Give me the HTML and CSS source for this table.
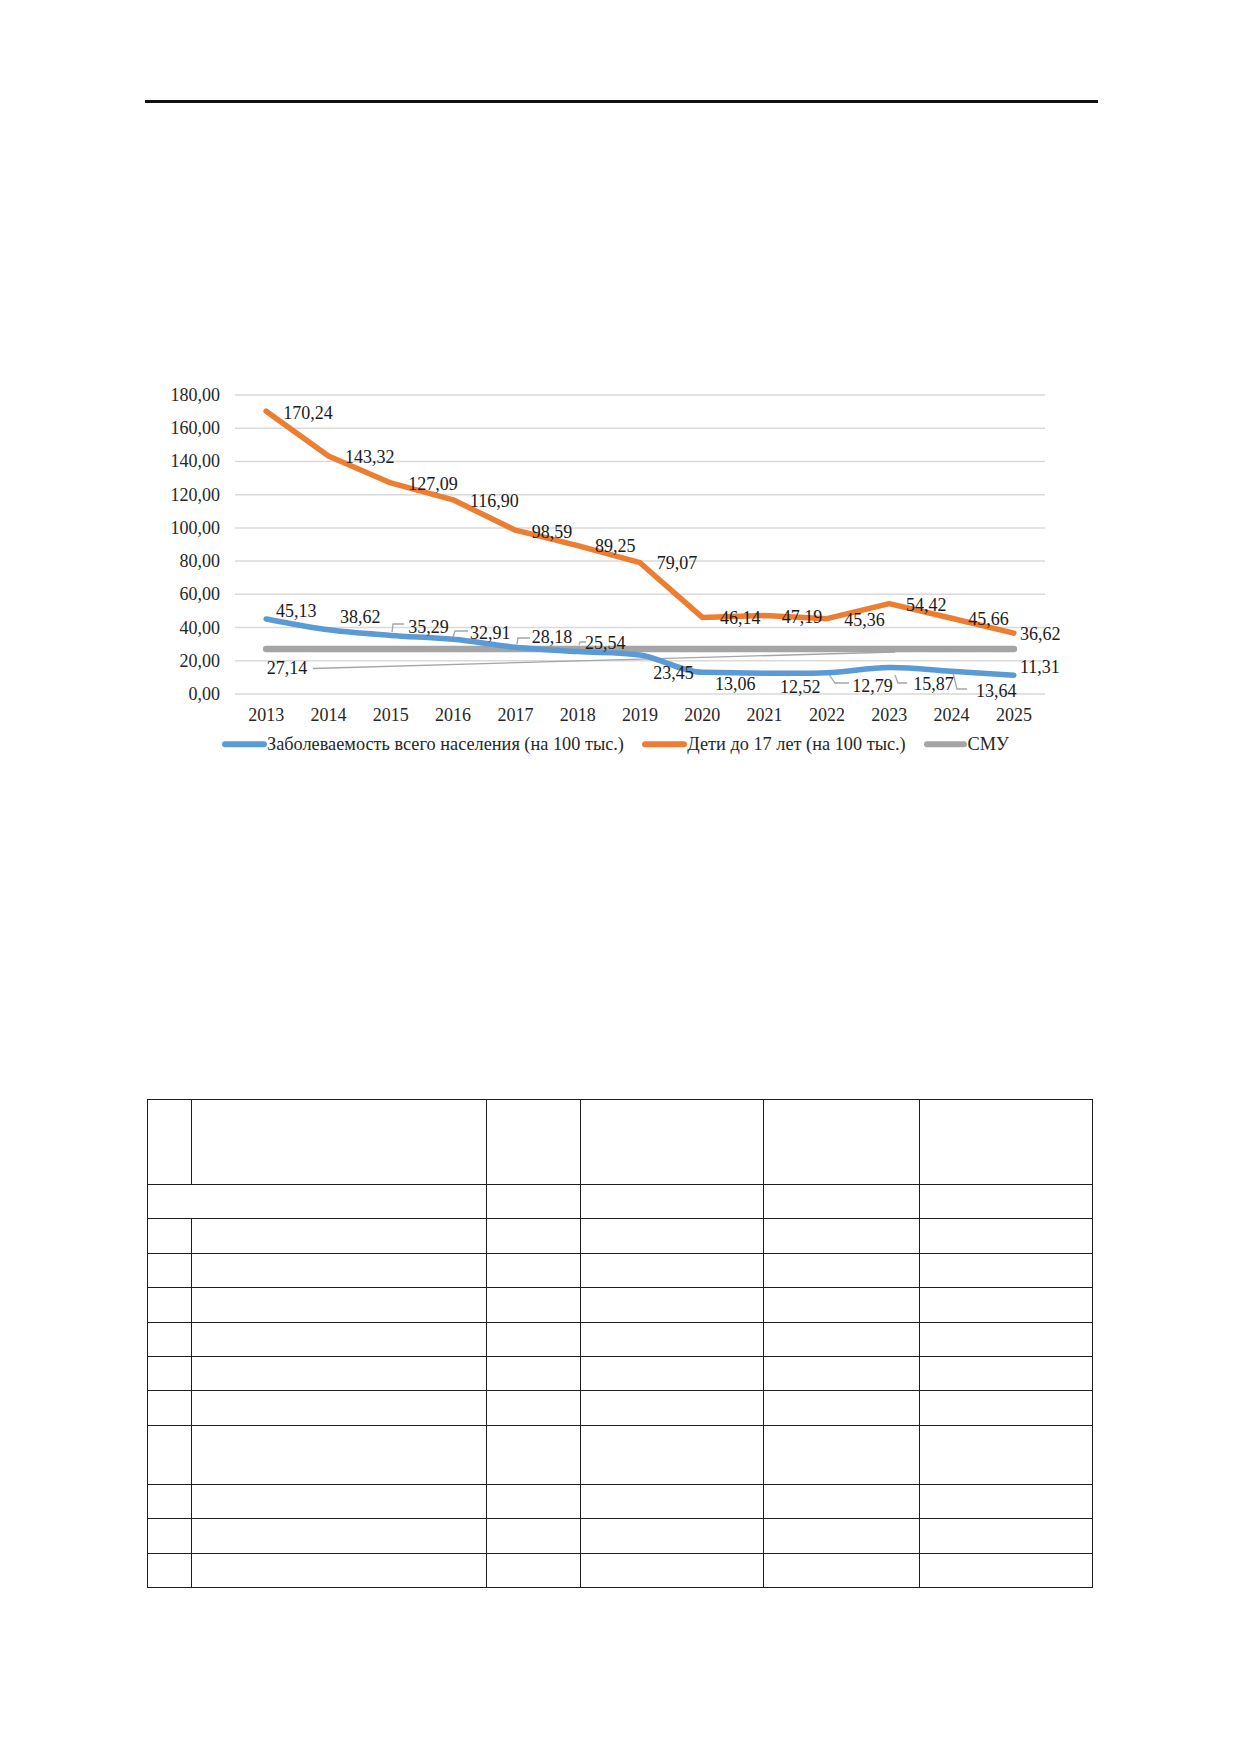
FILE: index.html
```html
<!DOCTYPE html>
<html lang="ru">
<head>
<meta charset="utf-8">
<title>Заболеваемость</title>
<link rel="stylesheet" href="styles.css">
</head>
<body>
<div class="page">
  <div class="rule"></div>

  <svg class="chart" viewBox="140 370 940 400" width="940" height="400" xmlns="http://www.w3.org/2000/svg">
    <g class="grid">
      <line x1="235" y1="395" x2="1045" y2="395"/>
      <line x1="235" y1="428.2" x2="1045" y2="428.2"/>
      <line x1="235" y1="461.4" x2="1045" y2="461.4"/>
      <line x1="235" y1="494.7" x2="1045" y2="494.7"/>
      <line x1="235" y1="527.9" x2="1045" y2="527.9"/>
      <line x1="235" y1="561.1" x2="1045" y2="561.1"/>
      <line x1="235" y1="594.3" x2="1045" y2="594.3"/>
      <line x1="235" y1="627.6" x2="1045" y2="627.6"/>
      <line x1="235" y1="660.8" x2="1045" y2="660.8"/>
      <line x1="235" y1="694" x2="1045" y2="694"/>
    </g>
    <g class="ylab">
      <text x="220" y="395">180,00</text>
      <text x="220" y="428.2">160,00</text>
      <text x="220" y="461.4">140,00</text>
      <text x="220" y="494.7">120,00</text>
      <text x="220" y="527.9">100,00</text>
      <text x="220" y="561.1">80,00</text>
      <text x="220" y="594.3">60,00</text>
      <text x="220" y="627.6">40,00</text>
      <text x="220" y="660.8">20,00</text>
      <text x="220" y="694">0,00</text>
    </g>
    <g class="xlab">
      <text x="266.2" y="715">2013</text>
      <text x="328.5" y="715">2014</text>
      <text x="390.8" y="715">2015</text>
      <text x="453.1" y="715">2016</text>
      <text x="515.4" y="715">2017</text>
      <text x="577.7" y="715">2018</text>
      <text x="640" y="715">2019</text>
      <text x="702.3" y="715">2020</text>
      <text x="764.6" y="715">2021</text>
      <text x="826.9" y="715">2022</text>
      <text x="889.2" y="715">2023</text>
      <text x="951.5" y="715">2024</text>
      <text x="1013.9" y="715">2025</text>
    </g>

    <g class="leader">
      <line x1="313" y1="668.5" x2="895" y2="652"/>
      <polyline points="392,632 393,624 404,624"/>
      <polyline points="453,637 455,631 468,631"/>
      <polyline points="517,644 518,638 530,638"/>
      <polyline points="579,645 580,642 586,642"/>
      <polyline points="828,673 835,683 849,683"/>
      <polyline points="895,675 898,683 907,683"/>
      <polyline points="953,673 957,689 967,689"/>
    </g>

    <line class="s-gray" x1="266.2" y1="648.9" x2="1013.9" y2="648.9"/>
    <path class="s-blue" d="M266.15,619 C276.5,620.8 307.7,627.1 328.46,629.8 C349.2,632.5 370,633.8 390.77,635.4 C411.5,637 432.3,637.3 453.08,639.3 C473.9,641.3 494.6,645.2 515.38,647.2 C536.2,649.2 556.9,650.3 577.69,651.6 C598.5,652.9 619.2,651.8 640,655 C660.8,658.2 681.5,671.8 702.31,672.3 C723.1,672.8 743.85,673.1 764.62,673.2 C785.4,673.3 806.15,673.7 826.92,672.8 C847.7,671.9 868.46,667.85 889.23,667.6 C910,667.35 930.77,670 951.54,671.3 C972.3,672.6 1003.5,674.55 1013.85,675.2"/>
    <polyline class="s-orange" points="266.15,411.2 328.46,455.9 390.77,482.9 453.08,499.8 515.38,530.2 577.69,545.7 640,562.7 702.31,617.4 764.62,615.6 826.92,618.7 889.23,603.6 951.54,618.2 1013.85,633.2"/>

    <g class="dlab">
      <text x="283.3" y="413.3">170,24</text>
      <text x="345" y="457.3">143,32</text>
      <text x="408.3" y="484">127,09</text>
      <text x="470" y="500.7">116,90</text>
      <text x="531.7" y="531.7">98,59</text>
      <text x="595" y="546">89,25</text>
      <text x="656.7" y="562.7">79,07</text>
      <text x="720" y="618.3">46,14</text>
      <text x="781.7" y="616.7">47,19</text>
      <text x="844.3" y="620">45,36</text>
      <text x="906" y="605">54,42</text>
      <text x="968.3" y="619.3">45,66</text>
      <text x="1020" y="634">36,62</text>

      <text x="276" y="610.7">45,13</text>
      <text x="340" y="616.7">38,62</text>
      <text x="408.3" y="626.7">35,29</text>
      <text x="470" y="632.7">32,91</text>
      <text x="531.7" y="637.3">28,18</text>
      <text x="585" y="643.3">25,54</text>
      <text x="653.3" y="673.3">23,45</text>
      <text x="715" y="684">13,06</text>
      <text x="780" y="687.3">12,52</text>
      <text x="852.3" y="686">12,79</text>
      <text x="913.3" y="684">15,87</text>
      <text x="976" y="691">13,64</text>
      <text x="1020" y="667.3">11,31</text>

      <text x="266.7" y="668.3">27,14</text>
    </g>

    <g class="legend">
      <line class="mk-blue" x1="225" y1="744.3" x2="264" y2="744.3"/>
      <text x="267" y="744.3">Заболеваемость всего населения (на 100 тыс.)</text>
      <line class="mk-orange" x1="645" y1="744.3" x2="684" y2="744.3"/>
      <text x="687.3" y="744.3">Дети до 17 лет (на 100 тыс.)</text>
      <line class="mk-gray" x1="927" y1="744.3" x2="964" y2="744.3"/>
      <text x="967.5" y="744.3">СМУ</text>
    </g>
  </svg>

  <table class="data-table">
    <colgroup>
      <col class="c1"><col class="c2"><col class="c3"><col class="c4"><col class="c5"><col class="c6">
    </colgroup>
    <tbody>
      <tr class="r-head"><td></td><td></td><td></td><td></td><td></td><td></td></tr>
      <tr class="r-std"><td colspan="2"></td><td></td><td></td><td></td><td></td></tr>
      <tr class="r-std"><td></td><td></td><td></td><td></td><td></td><td></td></tr>
      <tr class="r-std"><td></td><td></td><td></td><td></td><td></td><td></td></tr>
      <tr class="r-std"><td></td><td></td><td></td><td></td><td></td><td></td></tr>
      <tr class="r-std"><td></td><td></td><td></td><td></td><td></td><td></td></tr>
      <tr class="r-std"><td></td><td></td><td></td><td></td><td></td><td></td></tr>
      <tr class="r-std"><td></td><td></td><td></td><td></td><td></td><td></td></tr>
      <tr class="r-tall"><td></td><td></td><td></td><td></td><td></td><td></td></tr>
      <tr class="r-std"><td></td><td></td><td></td><td></td><td></td><td></td></tr>
      <tr class="r-std"><td></td><td></td><td></td><td></td><td></td><td></td></tr>
      <tr class="r-std"><td></td><td></td><td></td><td></td><td></td><td></td></tr>
    </tbody>
  </table>
</div>
</body>
</html>
```

FILE: styles.css
```css
html, body {
  margin: 0;
  padding: 0;
  background: #ffffff;
}

body {
  font-family: "Liberation Serif", "Times New Roman", serif;
  color: #000;
}

.page {
  width: 1240px;
  padding-top: 100px;
}

.rule {
  height: 3px;
  margin: 0 142px 0 145px;
  background: #111;
}

.chart {
  display: block;
  margin: 267px 0 0 140px;
  font-family: "Liberation Serif", "Times New Roman", serif;
  font-size: 18px;
}

.grid line {
  stroke: #d9d9d9;
  stroke-width: 1.5;
}

.ylab text {
  text-anchor: end;
  dominant-baseline: central;
  fill: #262626;
}

.xlab text {
  text-anchor: middle;
  dominant-baseline: central;
  fill: #262626;
}

.dlab text {
  dominant-baseline: central;
  fill: #1a1a1a;
}

.legend text {
  dominant-baseline: central;
  fill: #262626;
  font-size: 18.3px;
}

.leader line,
.leader polyline {
  fill: none;
  stroke: #a5a5a5;
  stroke-width: 1.3;
}

.s-gray {
  stroke: #a5a5a5;
  stroke-width: 6.5;
  stroke-linecap: round;
}

.s-blue {
  fill: none;
  stroke: #5b9bd5;
  stroke-width: 5.5;
  stroke-linecap: round;
  stroke-linejoin: round;
}

.s-orange {
  fill: none;
  stroke: #ed7d31;
  stroke-width: 5.5;
  stroke-linecap: round;
  stroke-linejoin: round;
}

.mk-blue, .mk-orange, .mk-gray {
  stroke-width: 6;
  stroke-linecap: round;
}
.mk-blue { stroke: #5b9bd5; }
.mk-orange { stroke: #ed7d31; }
.mk-gray { stroke: #a5a5a5; }

.data-table {
  margin: 329px 0 0 147px;
  border-collapse: collapse;
  table-layout: fixed;
  width: 945px;
}

.data-table td {
  border: 1px solid #1e1e1e;
  padding: 0;
}

.c1 { width: 44px; }
.c2 { width: 295px; }
.c3 { width: 94px; }
.c4 { width: 183px; }
.c5 { width: 156px; }
.c6 { width: 173px; }

.r-head td { height: 84px; }
.r-std td { height: 33.4px; }
.r-tall td { height: 58.3px; }
```
